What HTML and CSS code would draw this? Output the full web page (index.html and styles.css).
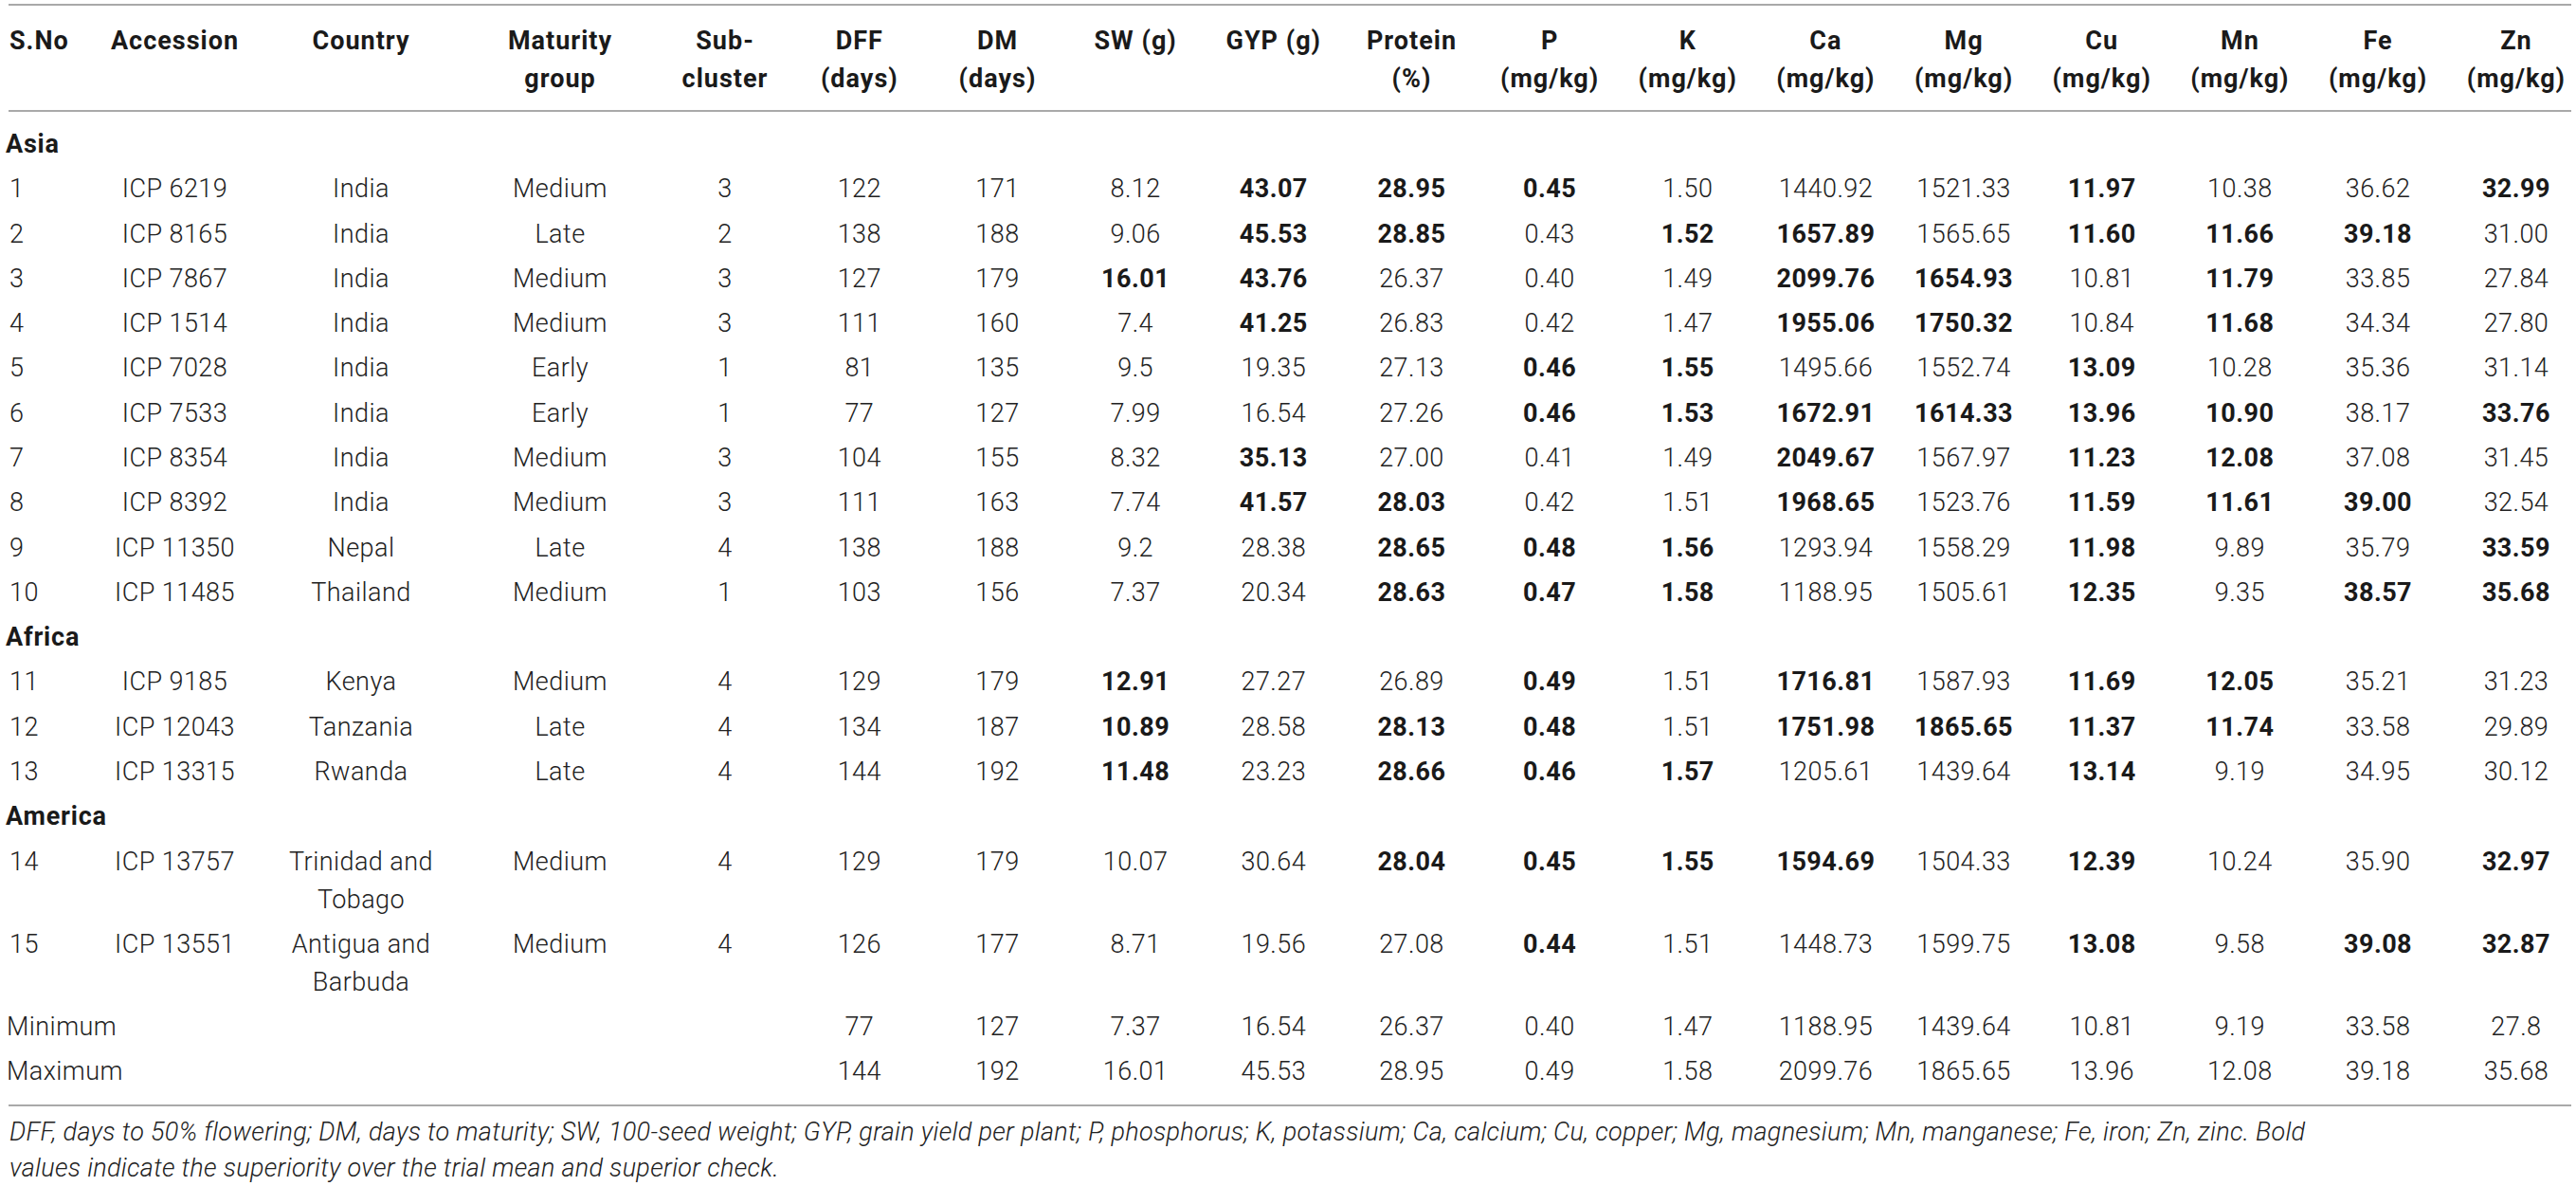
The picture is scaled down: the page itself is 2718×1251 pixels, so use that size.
FILE: index.html
```html
<!DOCTYPE html>
<html lang="en">

  <head>
    <meta charset="UTF-8">
    <title>Accession traits</title>
    <link rel="stylesheet" href="styles.css">
  </head>

  <body>
    <div class="sheet">
      <table class="traits">
        <colgroup>
          <col class="c-sno">
          <col class="c-acc">
          <col class="c-country">
          <col class="c-group">
          <col class="c-sub">
          <col class="c-num" span="12">
          <col class="c-last">
        </colgroup>
        <thead>
          <tr>
            <th class="sno">S.No</th>
            <th>Accession</th>
            <th>Country</th>
            <th>Maturity<br>group</th>
            <th>Sub-<br>cluster</th>
            <th>DFF<br>(days)</th>
            <th>DM<br>(days)</th>
            <th>SW (g)</th>
            <th>GYP (g)</th>
            <th>Protein<br>(%)</th>
            <th>P<br>(mg/kg)</th>
            <th>K<br>(mg/kg)</th>
            <th>Ca<br>(mg/kg)</th>
            <th>Mg<br>(mg/kg)</th>
            <th>Cu<br>(mg/kg)</th>
            <th>Mn<br>(mg/kg)</th>
            <th>Fe<br>(mg/kg)</th>
            <th class="last">Zn<br>(mg/kg)</th>
          </tr>
        </thead>
        <tbody>
          <tr class="first">
            <td class="region" colspan="18">Asia</td>
          </tr>
          <tr>
            <td class="sno">1</td><td>ICP 6219</td><td>India</td><td>Medium</td><td>3</td>
            <td>122</td><td>171</td><td>8.12</td><td><b>43.07</b></td><td><b>28.95</b></td><td><b>0.45</b></td><td>1.50</td>
            <td>1440.92</td><td>1521.33</td><td><b>11.97</b></td><td>10.38</td><td>36.62</td><td class="last"><b>32.99</b></td>
          </tr>
          <tr>
            <td class="sno">2</td><td>ICP 8165</td><td>India</td><td>Late</td><td>2</td>
            <td>138</td><td>188</td><td>9.06</td><td><b>45.53</b></td><td><b>28.85</b></td><td>0.43</td><td><b>1.52</b></td>
            <td><b>1657.89</b></td><td>1565.65</td><td><b>11.60</b></td><td><b>11.66</b></td><td><b>39.18</b></td><td class="last">31.00</td>
          </tr>
          <tr>
            <td class="sno">3</td><td>ICP 7867</td><td>India</td><td>Medium</td><td>3</td>
            <td>127</td><td>179</td><td><b>16.01</b></td><td><b>43.76</b></td><td>26.37</td><td>0.40</td><td>1.49</td>
            <td><b>2099.76</b></td><td><b>1654.93</b></td><td>10.81</td><td><b>11.79</b></td><td>33.85</td><td class="last">27.84</td>
          </tr>
          <tr>
            <td class="sno">4</td><td>ICP 1514</td><td>India</td><td>Medium</td><td>3</td>
            <td>111</td><td>160</td><td>7.4</td><td><b>41.25</b></td><td>26.83</td><td>0.42</td><td>1.47</td>
            <td><b>1955.06</b></td><td><b>1750.32</b></td><td>10.84</td><td><b>11.68</b></td><td>34.34</td><td class="last">27.80</td>
          </tr>
          <tr>
            <td class="sno">5</td><td>ICP 7028</td><td>India</td><td>Early</td><td>1</td>
            <td>81</td><td>135</td><td>9.5</td><td>19.35</td><td>27.13</td><td><b>0.46</b></td><td><b>1.55</b></td>
            <td>1495.66</td><td>1552.74</td><td><b>13.09</b></td><td>10.28</td><td>35.36</td><td class="last">31.14</td>
          </tr>
          <tr>
            <td class="sno">6</td><td>ICP 7533</td><td>India</td><td>Early</td><td>1</td>
            <td>77</td><td>127</td><td>7.99</td><td>16.54</td><td>27.26</td><td><b>0.46</b></td><td><b>1.53</b></td>
            <td><b>1672.91</b></td><td><b>1614.33</b></td><td><b>13.96</b></td><td><b>10.90</b></td><td>38.17</td><td class="last"><b>33.76</b></td>
          </tr>
          <tr>
            <td class="sno">7</td><td>ICP 8354</td><td>India</td><td>Medium</td><td>3</td>
            <td>104</td><td>155</td><td>8.32</td><td><b>35.13</b></td><td>27.00</td><td>0.41</td><td>1.49</td>
            <td><b>2049.67</b></td><td>1567.97</td><td><b>11.23</b></td><td><b>12.08</b></td><td>37.08</td><td class="last">31.45</td>
          </tr>
          <tr>
            <td class="sno">8</td><td>ICP 8392</td><td>India</td><td>Medium</td><td>3</td>
            <td>111</td><td>163</td><td>7.74</td><td><b>41.57</b></td><td><b>28.03</b></td><td>0.42</td><td>1.51</td>
            <td><b>1968.65</b></td><td>1523.76</td><td><b>11.59</b></td><td><b>11.61</b></td><td><b>39.00</b></td><td class="last">32.54</td>
          </tr>
          <tr>
            <td class="sno">9</td><td>ICP 11350</td><td>Nepal</td><td>Late</td><td>4</td>
            <td>138</td><td>188</td><td>9.2</td><td>28.38</td><td><b>28.65</b></td><td><b>0.48</b></td><td><b>1.56</b></td>
            <td>1293.94</td><td>1558.29</td><td><b>11.98</b></td><td>9.89</td><td>35.79</td><td class="last"><b>33.59</b></td>
          </tr>
          <tr>
            <td class="sno">10</td><td>ICP 11485</td><td>Thailand</td><td>Medium</td><td>1</td>
            <td>103</td><td>156</td><td>7.37</td><td>20.34</td><td><b>28.63</b></td><td><b>0.47</b></td><td><b>1.58</b></td>
            <td>1188.95</td><td>1505.61</td><td><b>12.35</b></td><td>9.35</td><td><b>38.57</b></td><td class="last"><b>35.68</b></td>
          </tr>
          <tr>
            <td class="region" colspan="18">Africa</td>
          </tr>
          <tr>
            <td class="sno">11</td><td>ICP 9185</td><td>Kenya</td><td>Medium</td><td>4</td>
            <td>129</td><td>179</td><td><b>12.91</b></td><td>27.27</td><td>26.89</td><td><b>0.49</b></td><td>1.51</td>
            <td><b>1716.81</b></td><td>1587.93</td><td><b>11.69</b></td><td><b>12.05</b></td><td>35.21</td><td class="last">31.23</td>
          </tr>
          <tr>
            <td class="sno">12</td><td>ICP 12043</td><td>Tanzania</td><td>Late</td><td>4</td>
            <td>134</td><td>187</td><td><b>10.89</b></td><td>28.58</td><td><b>28.13</b></td><td><b>0.48</b></td><td>1.51</td>
            <td><b>1751.98</b></td><td><b>1865.65</b></td><td><b>11.37</b></td><td><b>11.74</b></td><td>33.58</td><td class="last">29.89</td>
          </tr>
          <tr>
            <td class="sno">13</td><td>ICP 13315</td><td>Rwanda</td><td>Late</td><td>4</td>
            <td>144</td><td>192</td><td><b>11.48</b></td><td>23.23</td><td><b>28.66</b></td><td><b>0.46</b></td><td><b>1.57</b></td>
            <td>1205.61</td><td>1439.64</td><td><b>13.14</b></td><td>9.19</td><td>34.95</td><td class="last">30.12</td>
          </tr>
          <tr>
            <td class="region" colspan="18">America</td>
          </tr>
          <tr>
            <td class="sno">14</td><td>ICP 13757</td><td>Trinidad and<br>Tobago</td><td>Medium</td><td>4</td>
            <td>129</td><td>179</td><td>10.07</td><td>30.64</td><td><b>28.04</b></td><td><b>0.45</b></td><td><b>1.55</b></td>
            <td><b>1594.69</b></td><td>1504.33</td><td><b>12.39</b></td><td>10.24</td><td>35.90</td><td class="last"><b>32.97</b></td>
          </tr>
          <tr>
            <td class="sno">15</td><td>ICP 13551</td><td>Antigua and<br>Barbuda</td><td>Medium</td><td>4</td>
            <td>126</td><td>177</td><td>8.71</td><td>19.56</td><td>27.08</td><td><b>0.44</b></td><td>1.51</td>
            <td>1448.73</td><td>1599.75</td><td><b>13.08</b></td><td>9.58</td><td><b>39.08</b></td><td class="last"><b>32.87</b></td>
          </tr>
          <tr>
            <td class="label" colspan="5">Minimum</td>
            <td>77</td><td>127</td><td>7.37</td><td>16.54</td><td>26.37</td><td>0.40</td><td>1.47</td>
            <td>1188.95</td><td>1439.64</td><td>10.81</td><td>9.19</td><td>33.58</td><td class="last">27.8</td>
          </tr>
          <tr class="closing">
            <td class="label" colspan="5">Maximum</td>
            <td>144</td><td>192</td><td>16.01</td><td>45.53</td><td>28.95</td><td>0.49</td><td>1.58</td>
            <td>2099.76</td><td>1865.65</td><td>13.96</td><td>12.08</td><td>39.18</td><td class="last">35.68</td>
          </tr>
        </tbody>
      </table>

      <p class="note">DFF, days to 50% flowering; DM, days to maturity; SW, 100-seed weight; GYP, grain yield per plant; P, phosphorus; K, potassium; Ca, calcium; Cu, copper; Mg, magnesium; Mn, manganese; Fe, iron; Zn, zinc. Bold<br>values indicate the superiority over the trial mean and superior check.</p>
    </div>
  </body>

</html>
```

FILE: styles.css
```css
* {
  font-family: Roboto, 'Liberation Sans', sans-serif;
}

body {
  margin: 0;
  background: #fff;
  color: #222;
  font-weight: 300;
}

.sheet {
  padding: 4px 5px 0 9px;
}

.traits {
  width: 2704px;
  table-layout: fixed;
  border-collapse: separate;
  border-spacing: 0;
  border-top: 2px solid #a9a9a9;
  border-bottom: 2px solid #a9a9a9;
  font-size: 27px;
  line-height: 40px;
}

.c-sno {
  width: 84px;
}

.c-acc {
  width: 183px;
}

.c-country {
  width: 210px;
}

.c-group {
  width: 210px;
}

.c-sub {
  width: 138px;
}

.c-num {
  width: 145.67px;
}

.c-last {
  width: 131px;
}

.traits th {
  padding: 16.5px 0 13.5px;
  border-bottom: 2px solid #a9a9a9;
  font-weight: 700;
  color: #1a1a1a;
  letter-spacing: 1px;
  text-align: center;
  vertical-align: top;
  white-space: nowrap;
}

.traits td {
  padding: 3.65px 0;
  letter-spacing: 0.45px;
  text-align: center;
  vertical-align: top;
  white-space: nowrap;
}

.traits b {
  font-weight: 700;
  color: #1a1a1a;
}

/* first column sits flush left */
.traits .sno {
  text-align: left;
  padding-left: 1px;
}

.traits .last {
  padding-left: 15px;
}

.traits .region {
  text-align: left;
  font-weight: 700;
  color: #1a1a1a;
  letter-spacing: 0.8px;
  text-indent: -3px;
}

.traits .label {
  text-align: left;
  text-indent: -2px;
}

.traits .first td {
  padding-top: 14px;
}

.traits .closing td {
  padding-bottom: 14.3px;
}

.note {
  margin: 8.6px 0 0 1px;
  font-size: 27px;
  line-height: 38px;
  font-style: italic;
  letter-spacing: 0.3px;
  white-space: nowrap;
}
```
